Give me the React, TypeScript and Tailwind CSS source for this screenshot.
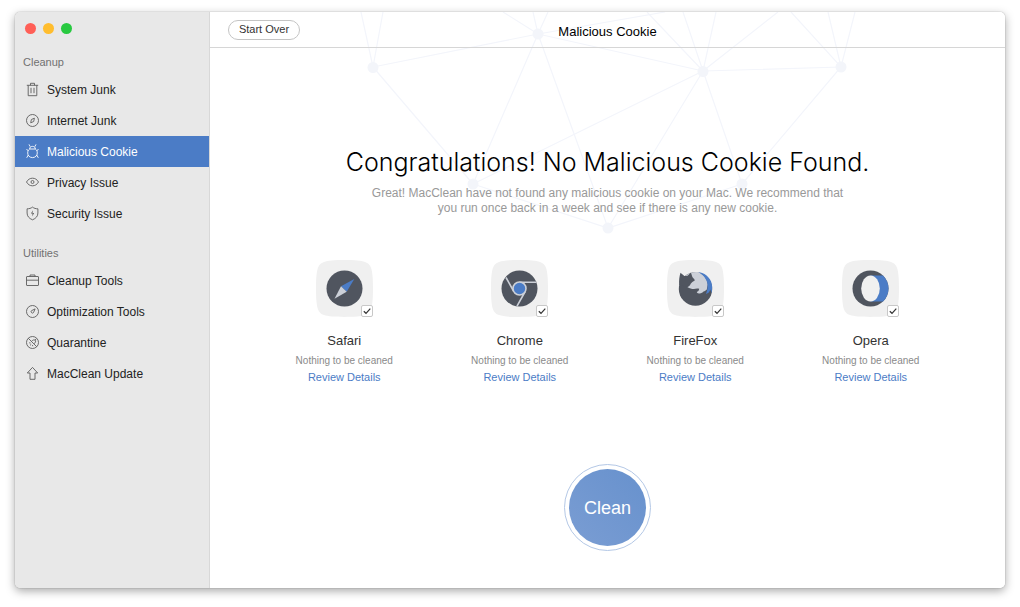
import type { ReactNode } from "react";

type NavItem = {
  label: string;
  icon: ReactNode;
  active?: boolean;
};

type Browser = {
  name: string;
  art: ReactNode;
};

const cleanupItems: NavItem[] = [
  {
    label: "System Junk",
    icon: (
      <>
        <path d="M.8 2.300h11.400M4.500 2.300V.3h4v2M2.200 2.300v10.400h8.600V2.300" />
        <path d="M5 4.800v5.400M8 4.800v5.400" />
      </>
    ),
  },
  {
    label: "Internet Junk",
    icon: (
      <>
        <circle cx="6.500" cy="6.500" r="6" />
        <path d="M8.400 4.200 7.700 7.500 4.700 8.800 5.400 5.500z" />
      </>
    ),
  },
  {
    label: "Malicious Cookie",
    active: true,
    icon: (
      <>
        <path d="M3.700 4h5.600c1.400 1 2 2.200 2 3.900 0 2.700-2 4.700-4.800 4.700S1.700 10.600 1.700 7.900c0-1.700.6-2.900 2-3.900z" />
        <path d="M3.700 4c0-1.800 1.100-2.600 2.800-2.600S9.300 2.200 9.300 4M4.200 1.700 3 -.6M8.800 1.700 10 -.6" />
        <path d="M2.200 5.900.5 4M10.800 5.900l1.700-1.900M2.300 10 .7 12.800M10.700 10l1.600 2.800" />
      </>
    ),
  },
  {
    label: "Privacy Issue",
    icon: (
      <>
        <path d="M.5 6C2 3.400 4 2.200 6.500 2.200S11 3.400 12.500 6C11 8.600 9 9.800 6.500 9.800S2 8.600.5 6z" />
        <circle cx="6.500" cy="6" r="1.500" />
      </>
    ),
  },
  {
    label: "Security Issue",
    icon: (
      <>
        <path d="M6.500.1C8 1.300 9.900 1.800 11.900 1.800V6c0 3.200-1.900 5.400-5.400 6.800C3 11.400 1.100 9.200 1.100 6V1.800C3.100 1.800 5 1.300 6.500.1z" />
        <path d="M7 3.300 4.900 6.600h1.700L6.100 9.600l2.100-3.500H6.500z" fill="currentColor" stroke="none" />
      </>
    ),
  },
];

const utilityItems: NavItem[] = [
  {
    label: "Cleanup Tools",
    icon: (
      <>
        <rect x=".5" y="2.500" width="12" height="9" rx=".5" />
        <path d="M4 2.500V1h5v1.500M.5 6.200h12" />
      </>
    ),
  },
  {
    label: "Optimization Tools",
    icon: (
      <>
        <circle cx="6.500" cy="6.500" r="6" />
        <path d="M9.100 3.900 7.500 7.600a1.300 1.300 0 1 1-2-1.900z" />
      </>
    ),
  },
  {
    label: "Quarantine",
    icon: (
      <>
        <circle cx="6.500" cy="6.500" r="6" />
        <path d="M2.200 2.200l8.600 8.600M5.600 5.400C6.500 3.800 8.300 3.600 9.200 4.200c.8.900.4 2.500-1 3.400M9 4.200l1.300-1.500" />
        <path d="M3.200 6.800l1.400.2M4 9.400l1.200-1.100M6.700 10.200 6.500 9" />
      </>
    ),
  },
  {
    label: "MacClean Update",
    icon: <path d="M6.500.4 11.700 6H9v6.300H4V6H1.300z" />,
  },
];

const browsers: Browser[] = [
  {
    name: "Safari",
    art: (
      <>
        <circle cx="28.500" cy="28.500" r="18" fill="#50555f" />
        <path d="M38.300 19 25 26.200l5.700 5.600z" fill="#4b7cc6" />
        <path d="M18.500 38.800 25 26.200l5.700 5.600z" fill="#ccd0d8" />
      </>
    ),
  },
  {
    name: "Chrome",
    art: (
      <>
        <circle cx="28.500" cy="28.500" r="18" fill="#50555f" />
        <g stroke="#ccd0d8" strokeWidth="1.600">
          <path d="M28.500 22.300h16.800M22.800 31.500 15 17.500M34.200 31.500 26 46.200" />
          <circle cx="28.500" cy="28.500" r="6.500" fill="#4b7cc6" />
        </g>
      </>
    ),
  },
  {
    name: "FireFox",
    art: (
      <>
        <circle cx="28.500" cy="29" r="16.700" fill="#50555f" />
        <path
          d="M19 15.400c3.500-2.800 8.500-4 13-3.100 5.500 3 8.300 7.200 8.700 12.200l-.9 5.100c-1.200 1.200-2 1.700-3.300 1.900-.8 1.100-2.300 2-4.100 1.900-1.400.2-2.500-.3-2.600-1.400 1.100-.3 2.200-1.500 2.400-3.200-1.500-.7-3.800-.4-5.300.3-2.300-.1-4.300-.6-6.300-1.800z"
          fill="#ccd0d8"
        />
        <path
          d="M12.200 25c-.4-4.500.2-8.700 1.300-12.200l3.900 3.300c1.100.1 2.200.1 3.200-.3l3.300-3.400c.8 2 1 3.700 1.800 5.100.9.900 1.800 1.700 2.100 2.900-1.700 1-3.400 1.900-4.100 3.400-.4 1.600-1.700 2.600-3.200 3.300z"
          fill="#50555f"
        />
        <path
          d="M31.500 12.100C39.500 13.500 45 19.500 45.200 27l-.5 6-1.400-3.400c-.6 2.300-2 4-4.300 4.400 1.100-3.400 1.900-6.100 1.500-9.700-.6-5-4.200-9.200-9-12.200z"
          fill="#4b7cc6"
        />
      </>
    ),
  },
  {
    name: "Opera",
    art: (
      <>
        <circle cx="28.500" cy="28.500" r="18" fill="#50555f" />
        <path d="M28.500 15.500h12.500a18 18 0 0 1 0 26H28.500z" fill="#4b7cc6" />
        <ellipse cx="28.500" cy="28.500" rx="9.300" ry="13" fill="#f0f0f0" />
      </>
    ),
  },
];

function NavList({ title, items }: { title: string; items: NavItem[] }) {
  return (
    <section>
      <h2 className="px-2 text-[11px] leading-4 text-[#717171]">{title}</h2>
      <ul className="mt-1">
        {items.map((item) => (
          <li key={item.label}>
            <a
              href="#"
              aria-current={item.active ? "page" : undefined}
              className={
                item.active
                  ? "flex h-[31px] items-center gap-2 bg-[#4b7cc6] pl-[11px] text-xs text-white"
                  : "flex h-[31px] items-center gap-2 pl-[11px] text-xs text-[#222222]"
              }
            >
              <svg
                viewBox="0 0 13 13"
                className={item.active ? "h-[13px] w-[13px] overflow-visible" : "h-[13px] w-[13px] overflow-visible text-[#5c5c5c]"}
                fill="none"
                stroke="currentColor"
                strokeWidth="0.9"
              >
                {item.icon}
              </svg>
              {item.label}
            </a>
          </li>
        ))}
      </ul>
    </section>
  );
}

function Network() {
  return (
    <svg
      viewBox="357 12 500 230"
      className="pointer-events-none absolute top-0 left-1/2 h-[230px] w-[500px] -translate-x-1/2"
      aria-hidden="true"
    >
      <g stroke="#f3f5fb" strokeWidth="1.200" fill="none">
        <path d="M360 12 372 67 382 12M372 67l165-33M372 67l100 117" />
        <path d="M502 12l35 22-5-22M547 12l-10 22 127-22M537 34 472 184M537 34l70 194M537 34l165 37" />
        <path d="M646 12l56 59-20-59M715 12l-13 59 75-59M702 71l138-4M702 71 472 184M702 71 607 228M702 71l39 113" />
        <path d="M790 12l50 55-13-55M854 12l-14 55-99 117" />
        <path d="M472 184l135 44 134-44" />
      </g>
      <g fill="#f3f5fa">
        <circle cx="372" cy="67.500" r="5.500" />
        <circle cx="537" cy="34" r="5.500" />
        <circle cx="702" cy="71.500" r="5.500" />
        <circle cx="840" cy="67" r="5.500" />
        <circle cx="472" cy="184" r="5.500" />
        <circle cx="741" cy="184" r="5.500" />
        <circle cx="607" cy="228" r="5.500" />
      </g>
    </svg>
  );
}

function BrowserCard({ name, art }: Browser) {
  const id = `browser-${name.toLowerCase()}`;

  return (
    <li className="flex flex-col items-center">
      <div className="relative">
        <svg viewBox="0 0 57 57" className="h-[57px] w-[57px]" fill="none">
          <path
            d="M28.500 0C39 0 45 .6 49 1.900c3.200 1 5.100 2.900 6.100 6.100C56.400 12 57 18 57 28.500S56.400 45 55.100 49c-1 3.200-2.900 5.100-6.100 6.100C45 56.400 39 57 28.500 57S12 56.400 8 55.100C4.800 54.100 2.900 52.200 1.900 49 .6 45 0 39 0 28.500S.6 12 1.900 8C2.900 4.800 4.800 2.900 8 1.900 12 .6 18 0 28.500 0z"
            fill="#f0f0f0"
          />
          {art}
        </svg>
        <input
          id={id}
          type="checkbox"
          defaultChecked
          className="peer absolute right-0 bottom-0 h-3 w-3 appearance-none rounded-xs border border-[#c8c8c8] bg-white"
        />
        <svg
          viewBox="0 0 12 12"
          className="pointer-events-none absolute right-0 bottom-0 hidden h-3 w-3 peer-checked:block"
          fill="none"
          stroke="#333333"
          strokeWidth="1.200"
        >
          <path d="M2.800 6.300 5 8.300 9.300 3.700" />
        </svg>
      </div>
      <label htmlFor={id} className="mt-4 text-[13px] leading-4 text-[#333333]">
        {name}
      </label>
      <p className="mt-1 text-[10px] leading-4 text-[#8a8a8a]">Nothing to be cleaned</p>
      <a href="#" className="text-[11px] leading-4 text-[#4b7cc6]">
        Review Details
      </a>
    </li>
  );
}

export default function App() {
  return (
    <div className="flex min-h-screen bg-white px-[15px] pt-3 pb-[19px] font-['Liberation_Sans',Arial,sans-serif]">
      <div className="flex flex-1 overflow-hidden rounded-[5px] shadow-[0_0_1px_rgba(0,0,0,0.5),0_3px_10px_rgba(0,0,0,0.35)]">
        <aside className="w-[195px] shrink-0 border-r border-[#d8d8d8] bg-[#e8e8e8]">
          <div className="flex gap-[7px] px-[10px] pt-[11px]">
            <button type="button" aria-label="Close" className="h-[11px] w-[11px] rounded-full bg-[#ff5f57]" />
            <button type="button" aria-label="Minimize" className="h-[11px] w-[11px] rounded-full bg-[#ffbd2e]" />
            <button type="button" aria-label="Zoom" className="h-[11px] w-[11px] rounded-full bg-[#28c940]" />
          </div>
          <nav className="mt-5 flex flex-col gap-4">
            <NavList title="Cleanup" items={cleanupItems} />
            <NavList title="Utilities" items={utilityItems} />
          </nav>
        </aside>

        <main className="relative flex-1 bg-white">
          <Network />
          <header className="relative grid h-9 grid-cols-[1fr_auto_1fr] items-center border-b border-[#d6d6d6] px-[18px] pt-1">
            <button
              type="button"
              className="mb-1 h-5 w-[72px] justify-self-start rounded-full border border-[#c4c4c4] bg-white text-[11px] text-[#333333]"
            >
              Start Over
            </button>
            <h1 className="text-[13px] leading-4 text-black">Malicious Cookie</h1>
          </header>

          <div className="relative flex flex-col items-center">
            <h2 className="mt-24 font-['Inter'] text-[25px] leading-9 font-light text-black">
              Congratulations! No Malicious Cookie Found.
            </h2>
            <p className="mt-[6px] text-center text-xs leading-[15px] text-[#999999]">
              Great! MacClean have not found any malicious cookie on your Mac. We recommend that
              <br />
              you run once back in a week and see if there is any new cookie.
            </p>

            <ul className="mt-11 grid w-full max-w-[702px] grid-cols-4">
              {browsers.map((browser) => (
                <BrowserCard key={browser.name} {...browser} />
              ))}
            </ul>

            <button
              type="button"
              className="mt-[79px] mb-9 h-[87px] w-[87px] rounded-full border border-[#b4c8e6] bg-white p-1 text-lg text-white"
            >
              <span className="flex h-full w-full items-center justify-center rounded-full bg-linear-to-tr from-[#7a9dd3] to-[#6791cd]">
                Clean
              </span>
            </button>
          </div>
        </main>
      </div>
    </div>
  );
}
